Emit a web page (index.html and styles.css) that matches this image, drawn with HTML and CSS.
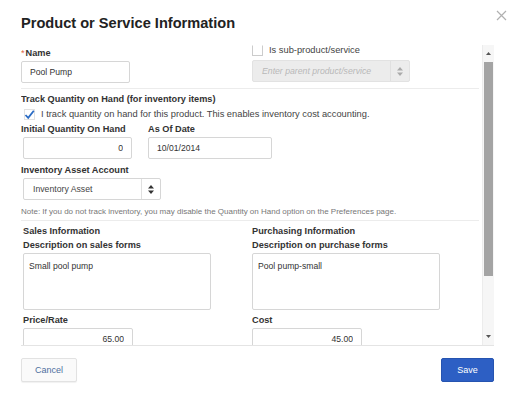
FILE: index.html
```html
<!DOCTYPE html>
<html>
<head>
  <title>Product or Service Information</title>
  <link rel="stylesheet" href="styles.css">
</head>
<body>
  <div class="dialog">
    <div class="header">Product or Service Information</div>
    <svg class="close" width="11" height="11" viewBox="0 0 11 11">
      <path d="M1 1L10 10M10 1L1 10" stroke="#b0b0b0" stroke-width="1.2" fill="none"/>
    </svg>

    <div class="body">
      <div class="content">

        <!-- name row -->
        <div class="row top-row">
          <div class="col-name">
            <div class="label"><span class="req">*</span>Name</div>
            <input class="field name-field" type="text" value="Pool Pump">
          </div>
          <div class="col-parent">
            <div class="check-line">
              <span class="box"></span>
              <span>Is sub-product/service</span>
            </div>
            <div class="select disabled parent-select">
              <span class="select-text">Enter parent product/service</span>
              <span class="select-arrow">
                <svg width="6" height="9" viewBox="0 0 6 9"><path d="M3 0L6 3.5H0ZM3 9L6 5.5H0Z" fill="#aaa"/></svg>
              </span>
            </div>
          </div>
        </div>

        <!-- inventory -->
        <div class="section">
          <div class="label">Track Quantity on Hand (for inventory items)</div>
          <div class="check-line tracked">
            <span class="box checked">
              <svg width="11" height="11" viewBox="0 0 11 11">
                <path d="M1.5 6L4.2 8.8L9.8 1.8" stroke="#2b6cc4" stroke-width="1.8" fill="none"/>
              </svg>
            </span>
            <span>I track quantity on hand for this product. This enables inventory cost accounting.</span>
          </div>
          <div class="row">
            <div class="col-qty">
              <div class="label">Initial Quantity On Hand</div>
              <input class="field num qty-field" type="text" value="0">
            </div>
            <div class="col-date">
              <div class="label">As Of Date</div>
              <input class="field date-field" type="text" value="10/01/2014">
            </div>
          </div>
          <div class="label">Inventory Asset Account</div>
          <div class="select asset-select">
            <span class="select-text">Inventory Asset</span>
            <span class="select-arrow">
              <svg width="6" height="9" viewBox="0 0 6 9"><path d="M3 0L6 3.5H0ZM3 9L6 5.5H0Z" fill="#333"/></svg>
            </span>
          </div>
          <div class="note">Note: If you do not track inventory, you may disable the Quantity on Hand option on the Preferences page.</div>
        </div>

        <!-- sales / purchasing -->
        <div class="row section money">
          <div class="col-half">
            <div class="label">Sales Information</div>
            <div class="label">Description on sales forms</div>
            <textarea class="field desc">Small pool pump</textarea>
            <div class="label">Price/Rate</div>
            <input class="field num price-field" type="text" value="65.00">
          </div>
          <div class="col-half">
            <div class="label">Purchasing Information</div>
            <div class="label">Description on purchase forms</div>
            <textarea class="field desc">Pool pump-small</textarea>
            <div class="label">Cost</div>
            <input class="field num price-field" type="text" value="45.00">
          </div>
        </div>

      </div>
      <div class="scrollbar">
        <span class="arrow"><svg width="5" height="3" viewBox="0 0 5 3"><path d="M2.5 0L5 3H0Z" fill="#555"/></svg></span>
        <span class="thumb"></span>
        <span class="track"></span>
        <span class="arrow"><svg width="5" height="3" viewBox="0 0 5 3"><path d="M0 0H5L2.5 3Z" fill="#555"/></svg></span>
      </div>
    </div>

    <div class="footer">
      <button class="btn cancel">Cancel</button>
      <button class="btn save">Save</button>
    </div>
  </div>
</body>
</html>
```

FILE: styles.css
```css
body {
  margin: 0;
  background-color: #fff;
  font-family: "Liberation Sans", Arial, sans-serif;
  color: #333;
}

.dialog {
  position: relative;
  width: 514px;
  height: 400px;
  padding: 0 20px 0 21px;
  box-sizing: border-box;
}

.header {
  height: 45px;
  padding-top: 15px;
  box-sizing: border-box;
  font-size: 14.6px;
  font-weight: bold;
  color: #222;
}

.close {
  position: absolute;
  top: 10px;
  right: 7px;
}

.body {
  display: flex;
  height: 300px;
  border-bottom: 1px solid #e4e4e4;
  overflow: hidden;
}

.content {
  width: 460px;
  margin-right: 3px;
  overflow: hidden;
}

.row {
  display: flex;
}

.label {
  font-size: 9.2px;
  font-weight: bold;
  color: #333;
  height: 14px;
  line-height: 14px;
  white-space: nowrap;
}

.req {
  color: #e06040;
  font-weight: normal;
  margin-right: 1px;
}

.field {
  display: block;
  box-sizing: border-box;
  height: 22px;
  border: 1px solid #d6d6d6;
  border-radius: 2px;
  padding: 0 8px;
  font-family: "Liberation Sans", Arial, sans-serif;
  font-size: 8.6px;
  color: #333;
  background-color: #fff;
  margin: 0;
}

.num {
  text-align: right;
}

.top-row {
  height: 43px;
  border-bottom: 1px solid #ececec;
}

.col-name {
  width: 230px;
  padding-top: 1px;
}

.name-field {
  width: 109px;
  margin-top: 1px;
}

.check-line {
  display: flex;
  align-items: center;
  font-size: 9.3px;
  color: #444;
  height: 14px;
  white-space: nowrap;
}

.box {
  display: flex;
  width: 11px;
  height: 11px;
  border: 1px solid #ccc;
  border-top-color: #fff;
  margin-right: 6px;
  box-sizing: border-box;
}

.box.checked {
  border: 1px solid #e2e2e2;
  overflow: visible;
}

.box.checked svg {
  margin: -1px;
}

.col-parent {
  margin-left: 1px;
}

.col-parent .check-line {
  margin-top: -2px;
  margin-bottom: 3px;
}

.select {
  display: flex;
  box-sizing: border-box;
  height: 22px;
  border: 1px solid #d6d6d6;
  border-radius: 2px;
  font-size: 8.7px;
  background-color: #fff;
}

.select-text {
  flex: 1;
  line-height: 20px;
  padding-left: 9px;
}

.select-arrow {
  display: flex;
  align-items: center;
  justify-content: center;
  width: 18px;
  border-left: 1px solid #e0e0e0;
}

.disabled {
  background-color: #ececec;
  border-color: #e2e2e2;
}

.disabled .select-text {
  color: #b8b8b8;
  font-style: italic;
}

.parent-select {
  width: 158px;
}

.section {
  padding-top: 3px;
}

.tracked {
  margin: 1px 0 1px 3px;
}

.col-qty {
  width: 127px;
}

.qty-field {
  width: 109px;
  margin: 1px 0 4px 2px;
}

.date-field {
  width: 124px;
  margin: 1px 0 4px 0;
}

.asset-select {
  width: 138px;
  margin: 1px 0 0 2px;
}

.asset-select .select-text {
  color: #444;
}

.note {
  font-size: 8px;
  color: #777;
  height: 20px;
  line-height: 24px;
  white-space: nowrap;
  border-bottom: 1px solid #ececec;
}

.money {
  padding-top: 3px;
}

.col-half {
  width: 228px;
  padding-left: 2px;
}

.desc {
  width: 188px;
  height: 57px;
  resize: none;
  padding: 7px 5px;
  margin: 1px 0 3px 0;
  font-size: 8.6px;
  overflow: hidden;
}

.price-field {
  width: 110px;
  margin-top: 1px;
}

.scrollbar {
  display: flex;
  flex-direction: column;
  width: 11px;
  background-color: #f6f6f6;
  border-left: 1px solid #ececec;
}

.arrow {
  display: flex;
  align-items: center;
  justify-content: center;
  height: 17px;
}

.thumb {
  height: 214px;
  background-color: #a4a4a4;
  margin: 0 1px;
}

.track {
  flex: 1;
}

.footer {
  display: flex;
  justify-content: space-between;
  padding-top: 12px;
}

.btn {
  height: 24px;
  border-radius: 2px;
  font-family: "Liberation Sans", Arial, sans-serif;
  font-size: 9px;
  cursor: pointer;
}

.cancel {
  width: 56px;
  background-color: #fafafa;
  border: 1px solid #e2e2e2;
  color: #4f6f9f;
  box-shadow: 0 1px 1px rgba(0, 0, 0, 0.06);
}

.save {
  width: 53px;
  background-color: #2d5fc4;
  border: 1px solid #2654b0;
  color: #fff;
}
```
